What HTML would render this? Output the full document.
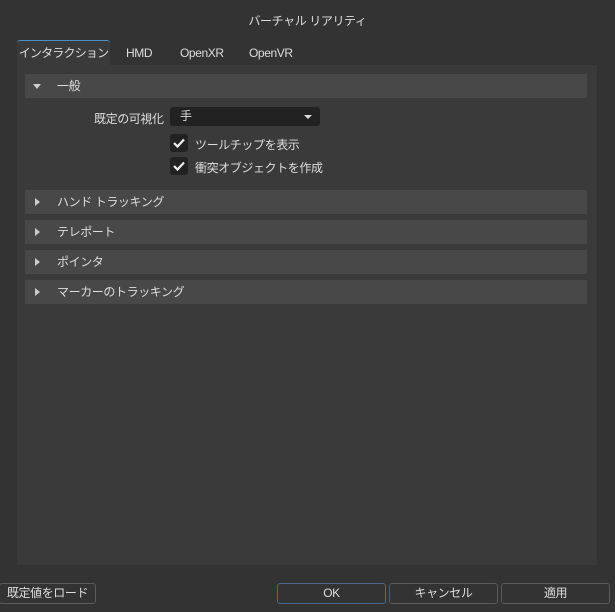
<html><head><style>
body{margin:0;width:615px;height:612px;background:#333;font-family:"Liberation Sans","Noto Sans CJK JP",sans-serif;font-size:12px;letter-spacing:-0.4px;color:#ddd;position:relative;overflow:hidden}
.a{position:absolute;white-space:nowrap}
.sec{position:absolute;left:25px;width:562px;height:24px;background:#484848;line-height:24px}
.sec span{position:absolute;left:32px}
.tri{position:absolute;left:10px;top:8px;width:0;height:0;border-top:4px solid transparent;border-bottom:4px solid transparent;border-left:5px solid #ccc}
.btn{position:absolute;top:583px;height:19px;border:1px solid #5a5a5a;border-radius:3px;text-align:center;line-height:19px;color:#ddd;white-space:nowrap}
.cb{position:absolute;left:170px;width:18px;height:18px;background:#222;border-radius:3px}
</style></head><body>
<div class="a" style="left:0;width:615px;top:12px;text-align:center">バーチャル リアリティ</div>
<div class="a" style="left:17px;top:40px;width:93px;height:25px;background:#3a3a3a;border-top:1px solid #4a90c8;border-radius:3px 3px 0 0;line-height:25px;text-align:center;letter-spacing:-0.8px">インタラクション</div>
<div class="a" style="left:126px;top:46px">HMD</div>
<div class="a" style="left:180px;top:46px">OpenXR</div>
<div class="a" style="left:249px;top:46px">OpenVR</div>
<div class="a" style="left:17px;top:65px;width:580px;height:500px;background:#3a3a3a"></div>
<div class="sec" style="top:74px"><div class="tri" style="left:8px;top:10px;border-left:4px solid transparent;border-right:4px solid transparent;border-top:5px solid #ccc;border-bottom:0"></div><span>一般</span></div>
<div class="a" style="left:94px;top:110px">既定の可視化</div>
<div class="a" style="left:170px;top:107px;width:150px;height:19px;background:#222;border-radius:3px;line-height:19px"><span style="margin-left:10px">手</span><div class="a" style="right:8px;top:8px;border-left:4px solid transparent;border-right:4px solid transparent;border-top:4px solid #ddd"></div></div>
<div class="cb" style="top:134px"><svg width="18" height="18"><path d="M4 9l3.5 3.5L14 5.5" stroke="#eee" stroke-width="2.2" fill="none"/></svg></div>
<div class="a" style="left:195px;top:136px">ツールチップを表示</div>
<div class="cb" style="top:157px"><svg width="18" height="18"><path d="M4 9l3.5 3.5L14 5.5" stroke="#eee" stroke-width="2.2" fill="none"/></svg></div>
<div class="a" style="left:195px;top:159px">衝突オブジェクトを作成</div>
<div class="sec" style="top:190px"><div class="tri"></div><span>ハンド トラッキング</span></div>
<div class="sec" style="top:220px"><div class="tri"></div><span>テレポート</span></div>
<div class="sec" style="top:250px"><div class="tri"></div><span>ポインタ</span></div>
<div class="sec" style="top:280px"><div class="tri"></div><span>マーカーのトラッキング</span></div>
<div class="btn" style="left:-1px;width:95px">既定値をロード</div>
<div class="btn" style="left:277px;width:107px;border-color:#4a6a8a">OK</div>
<div class="btn" style="left:389px;width:107px">キャンセル</div>
<div class="btn" style="left:501px;width:107px">適用</div>
</body></html>
